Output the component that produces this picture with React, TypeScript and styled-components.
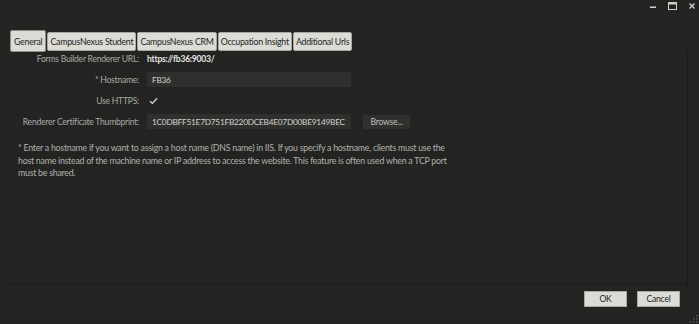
import styled, { createGlobalStyle } from 'styled-components';

const GlobalStyle = createGlobalStyle`
  html, body {
    margin: 0;
    padding: 0;
    background: #232421;
  }
  body {
    font-family: Lato, 'Open Sans', sans-serif;
    letter-spacing: -0.25px;
  }
`;

const tabs = [
  'General',
  'CampusNexus Student',
  'CampusNexus CRM',
  'Occupation Insight',
  'Additional Urls',
];

export default function App() {
  return (
    <>
      <GlobalStyle />
      <StyledWindow>
        <StyledTitleBar>
          <StyledCaptionButton>
            <svg width="8" height="8" viewBox="0 0 8 8">
              <rect x="1" y="4.5" width="6" height="1.5" fill="#cfcfcc" />
            </svg>
          </StyledCaptionButton>
          <StyledCaptionButton>
            <svg width="9" height="8" viewBox="0 0 9 8">
              <rect x="0.5" y="0.5" width="8" height="7" fill="none" stroke="#cfcfcc" />
              <rect x="0.5" y="0.5" width="8" height="2" fill="#cfcfcc" />
            </svg>
          </StyledCaptionButton>
          <StyledCaptionButton>
            <svg width="6" height="6" viewBox="0 0 6 6">
              <path d="M0.5 0.5 L5.5 5.5 M5.5 0.5 L0.5 5.5" stroke="#cfcfcc" strokeWidth="1.4" />
            </svg>
          </StyledCaptionButton>
        </StyledTitleBar>

        <StyledTabRow>
          {tabs.map((t, index) => (
            <StyledTab key={t} active={index === 0}>
              {t}
            </StyledTab>
          ))}
        </StyledTabRow>

        <StyledPanel>
          <StyledForm>
            <StyledLabel>Forms Builder Renderer URL:</StyledLabel>
            <StyledValue>https://fb36:9003/</StyledValue>

            <StyledLabel>* Hostname:</StyledLabel>
            <StyledInput>FB36</StyledInput>

            <StyledLabel>Use HTTPS:</StyledLabel>
            <StyledCheck>
              <svg width="9" height="8" viewBox="0 0 9 8">
                <path d="M1 4.2 L3.4 6.4 L8 1.2" fill="none" stroke="#d8d8d5" strokeWidth="1.3" />
              </svg>
            </StyledCheck>

            <StyledLabel>Renderer Certificate Thumbprint:</StyledLabel>
            <StyledInputRow>
              <StyledInput>1C0DBFF51E7D751FB220DCEB4E07D00BE9149BEC</StyledInput>
              <StyledDarkButton>Browse...</StyledDarkButton>
            </StyledInputRow>
          </StyledForm>

          <StyledNote>
            * Enter a hostname if you want to assign a host name (DNS name) in IIS. If you specify a
            hostname, clients must use the host name instead of the machine name or IP address to
            access the website. This feature is often used when a TCP port must be shared.
          </StyledNote>
        </StyledPanel>

        <StyledFooter>
          <StyledLightButton>OK</StyledLightButton>
          <StyledLightButton>Cancel</StyledLightButton>
        </StyledFooter>
        <StyledGrip>
          <svg width="8" height="8" viewBox="0 0 8 8">
            <rect x="6" y="0" width="1.5" height="1.5" fill="#5a5b57" />
            <rect x="3" y="3" width="1.5" height="1.5" fill="#5a5b57" />
            <rect x="6" y="3" width="1.5" height="1.5" fill="#5a5b57" />
            <rect x="0" y="6" width="1.5" height="1.5" fill="#5a5b57" />
            <rect x="3" y="6" width="1.5" height="1.5" fill="#5a5b57" />
            <rect x="6" y="6" width="1.5" height="1.5" fill="#5a5b57" />
          </svg>
        </StyledGrip>
      </StyledWindow>
    </>
  );
}

const StyledWindow = styled.div`
  position: relative;
  width: 699px;
  height: 324px;
  display: flex;
  flex-direction: column;
  background: #232421;
  overflow: hidden;
`;

const StyledTitleBar = styled.div`
  height: 30px;
  display: flex;
  justify-content: flex-end;
  align-items: flex-start;
  padding: 1px 2px 0 0;
  box-sizing: border-box;
  gap: 9.5px;
`;

const StyledCaptionButton = styled.div`
  width: 10px;
  height: 10px;
  display: flex;
  align-items: center;
  justify-content: center;
`;

const StyledTabRow = styled.div`
  display: flex;
  align-items: flex-start;
  padding-left: 10px;
  gap: 1px;
  height: 21px;
`;

const StyledTab = styled.div<{ active?: boolean }>`
  height: ${(props) => (props.active ? '22px' : '19px')};
  margin-top: ${(props) => (props.active ? '0' : '2px')};
  padding: 0 ${(props) => (props.active ? '3px' : '2px')};
  box-sizing: border-box;
  display: flex;
  align-items: center;
  background: #dcdcd7;
  border: 1px solid ${(props) => (props.active ? '#8f8f8b' : '#a8a8a3')};
  border-radius: 2px;
  color: #1e1e1e;
  font-size: 8.8px;
  white-space: nowrap;
`;

const StyledPanel = styled.div`
  margin: 0 11px 0 8px;
  height: 233px;
  border-right: 1px solid #1a1b19;
  border-bottom: 1px solid #1a1b19;
  display: flex;
  flex-direction: column;
`;

const StyledForm = styled.div`
  display: grid;
  grid-template-columns: 131px auto;
  grid-auto-rows: 15px;
  column-gap: 8px;
  row-gap: 6px;
  align-items: center;
`;

const StyledLabel = styled.div`
  text-align: right;
  color: #a9a9a6;
  font-size: 8.6px;
  white-space: nowrap;
`;

const StyledValue = styled.div`
  color: #e4e4e1;
  font-size: 8.6px;
  font-weight: bold;
`;

const StyledInputRow = styled.div`
  display: flex;
  align-items: center;
  gap: 12px;
`;

const StyledInput = styled.div`
  width: 204px;
  height: 15px;
  box-sizing: border-box;
  background: #2f302d;
  color: #d2d2cf;
  font-size: 8.3px;
  padding-left: 5px;
  display: flex;
  align-items: center;
  white-space: nowrap;
  overflow: hidden;
`;

const StyledCheck = styled.div`
  padding-left: 2px;
  display: flex;
  align-items: center;
`;

const StyledDarkButton = styled.div`
  width: 47px;
  height: 14px;
  background: #30312e;
  color: #bdbdba;
  font-size: 8.6px;
  display: flex;
  align-items: center;
  justify-content: center;
`;

const StyledNote = styled.p`
  margin: 13px 0 0 10px;
  width: 436px;
  color: #b1b1ae;
  font-size: 8.8px;
  line-height: 12.5px;
`;

const StyledFooter = styled.div`
  display: flex;
  justify-content: flex-end;
  gap: 10px;
  padding: 6px 19px 0 0;
`;

const StyledLightButton = styled.div`
  width: 43px;
  height: 16px;
  box-sizing: border-box;
  background: #dcdcd7;
  border: 1px solid #a8a8a3;
  color: #1e1e1e;
  font-size: 8.6px;
  display: flex;
  align-items: center;
  justify-content: center;
`;

const StyledGrip = styled.div`
  position: absolute;
  right: 1px;
  bottom: 1px;
  display: flex;
`;
